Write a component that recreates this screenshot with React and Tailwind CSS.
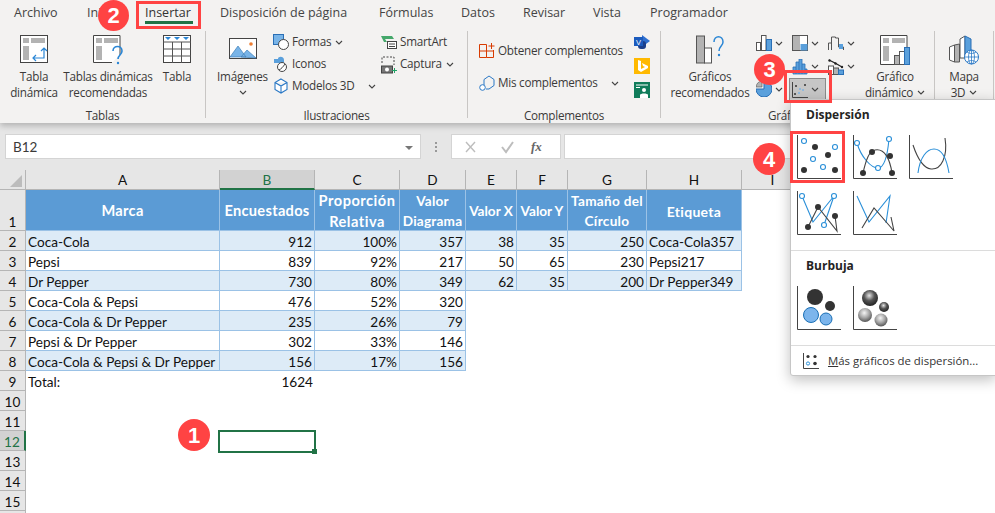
import React from "react";

const columns = ["A", "B", "C", "D", "E", "F", "G", "H", "I", "J"];

const rows = [
  { n: 2, band: true, cells: ["Coca-Cola", "912", "100%", "357", "38", "35", "250", "Coca-Cola357"] },
  { n: 3, cells: ["Pepsi", "839", "92%", "217", "50", "65", "230", "Pepsi217"] },
  { n: 4, band: true, cells: ["Dr Pepper", "730", "80%", "349", "62", "35", "200", "Dr Pepper349"] },
  { n: 5, cells: ["Coca-Cola & Pepsi", "476", "52%", "320"] },
  { n: 6, band: true, cells: ["Coca-Cola & Dr Pepper", "235", "26%", "79"] },
  { n: 7, cells: ["Pepsi & Dr Pepper", "302", "33%", "146"] },
  { n: 8, band: true, cells: ["Coca-Cola & Pepsi & Dr Pepper", "156", "17%", "156"] },
];

const headers = [
  { lines: ["Marca"], cls: "text-[14.6px] tracking-[0.3px]" },
  { lines: ["Encuestados"], cls: "text-[14.6px] tracking-[0.3px]" },
  { lines: ["Proporción", "Relativa"], cls: "text-[14.6px] tracking-[0.5px]" },
  { lines: ["Valor", "Diagrama"], cls: "tracking-[0.2px]" },
  { lines: ["Valor X"], cls: "" },
  { lines: ["Valor Y"], cls: "" },
  { lines: ["Tamaño del", "Círculo"], cls: "tracking-[0.3px]" },
  { lines: ["Etiqueta"], cls: "text-[14px] tracking-[0.3px]" },
];

function Chevron({ className = "" }) {
  return (
    <svg width="8" height="5" viewBox="0 0 8 5" className={className}>
      <path d="M1 1l3 3 3-3" fill="none" stroke="#444" strokeWidth="1.1" />
    </svg>
  );
}

function Sep() {
  return <div className="mt-[3px] h-[87px] w-px shrink-0 bg-[#c8c6c4]" />;
}

function Group({ width, label, labelClass = "", children }) {
  return (
    <div className={`flex h-[95px] shrink-0 flex-col ${width}`}>
      <div className="flex h-[79px] items-start">{children}</div>
      <div className={`h-4 text-center leading-4 ${labelClass}`}>{label}</div>
    </div>
  );
}

function BigButton({ width, icon, lines, chevronLine, ml = "" }) {
  return (
    <div className={`flex shrink-0 flex-col items-center text-center ${width} ${ml}`}>
      <div className="flex h-[40px] items-start pt-[7px]">{icon}</div>
      {lines.map((l, i) => (
        <div key={i} className="flex h-4 items-center gap-1 whitespace-nowrap leading-4">
          {l}
          {chevronLine === i && <Chevron />}
        </div>
      ))}
    </div>
  );
}

function SmallRow({ icon, label, chevron }) {
  return (
    <div className="flex h-[22px] items-center gap-[3px] whitespace-nowrap">
      <div className="h-4 w-4 shrink-0">{icon}</div>
      <span>{label}</span>
      {chevron}
    </div>
  );
}

/* ribbon icons */
const PivotIcon = () => (
  <svg width="28" height="28" viewBox="0 0 28 28">
    <rect x="0.5" y="0.5" width="27" height="27" fill="#fff" stroke="#444" />
    <rect x="3" y="3" width="6" height="5" fill="#b3b3b3" />
    <rect x="11" y="3" width="14" height="5" fill="#b3b3b3" />
    <rect x="3" y="11" width="6" height="14" fill="#b3b3b3" />
    <path d="M13 23h11v-10M21 16l3-3 3 3M16 20l-3 3 3 3" fill="none" stroke="#2a86d5" strokeWidth="1.2" />
  </svg>
);

const RecommendedPivotIcon = () => (
  <svg width="30" height="30" viewBox="0 0 30 30">
    <path d="M27 20V.5H.5v27H19" fill="#fff" stroke="#444" />
    <rect x="3" y="3" width="6" height="5" fill="#b3b3b3" />
    <rect x="11" y="3" width="14" height="5" fill="#b3b3b3" />
    <rect x="3" y="11" width="6" height="14" fill="#b3b3b3" />
    <path d="M20 16c0-6 9-6 9 0 0 4-4 4-4 8" fill="none" stroke="#2a86d5" strokeWidth="1.6" />
    <circle cx="25" cy="28" r="1.2" fill="#2a86d5" />
  </svg>
);

const TableIcon = () => (
  <svg width="28" height="28" viewBox="0 0 28 28">
    <rect x="0.5" y="0.5" width="27" height="27" fill="#fff" stroke="#444" />
    <path d="M0 7h28M0 14h28M0 21h28M9.5 7v21M18.5 7v21" stroke="#555" />
    <path d="M2 2h6l-3 3zM11 2h6l-3 3zM20 2h6l-3 3z" fill="#2a86d5" />
  </svg>
);

const PictureIcon = () => (
  <svg width="28" height="21" viewBox="0 0 28 21" className="mt-[3px]">
    <rect x="0.5" y="0.5" width="27" height="20" fill="#fff" stroke="#444" />
    <path d="M1 19l8-11 8 11zM12 19l6-7 9 8v0z" fill="#78b4e8" stroke="#3f7fb8" strokeWidth="0.7" />
    <circle cx="22" cy="6" r="1.8" fill="#ed7d31" />
  </svg>
);

const ShapesIcon = () => (
  <svg width="16" height="16" viewBox="0 0 16 16">
    <rect x="0.5" y="0.5" width="10" height="10" fill="#78b4e8" stroke="#2a6fb5" />
    <circle cx="10.5" cy="10.5" r="5" fill="#fff" stroke="#444" />
  </svg>
);

const IconsIcon = () => (
  <svg width="16" height="16" viewBox="0 0 16 16">
    <path d="M1 3h4c0-3 6-3 6 1v3H1z" fill="#5aa0dc" />
    <circle cx="9" cy="11" r="4.5" fill="#fff" stroke="#444" />
    <path d="M6 14c2-1 4-3 6-6" stroke="#444" fill="none" />
  </svg>
);

const ModelsIcon = () => (
  <svg width="16" height="16" viewBox="0 0 16 16">
    <path d="M8 1l6 3.5v7L8 15l-6-3.5v-7zM2 4.5L8 8l6-3.5M8 8v7" fill="#fff" stroke="#2a78c5" strokeWidth="1.1" />
  </svg>
);

const SmartArtIcon = () => (
  <svg width="16" height="16" viewBox="0 0 16 16">
    <path d="M0 2h11l2 3H4l2 3H3z" fill="#45a86b" />
    <rect x="6.5" y="7.5" width="9" height="7" fill="#fff" stroke="#444" />
    <path d="M8 10h6M8 12.5h6" stroke="#444" />
  </svg>
);

const CaptureIcon = () => (
  <svg width="16" height="18" viewBox="0 0 16 18">
    <path d="M1 7V1h12v8" fill="none" stroke="#444" strokeDasharray="2 1.5" />
    <rect x="0.5" y="10" width="11" height="7" fill="#777" stroke="#444" />
    <circle cx="6" cy="13.5" r="2" fill="#fff" />
    <path d="M13.5 12v5M11 14.5h5" stroke="#21a366" />
  </svg>
);

const GetAddinsIcon = () => (
  <svg width="16" height="16" viewBox="0 0 16 16">
    <path d="M.5 1.5h7v13h-7zM.5 8h14v6.5h-7M14.5 8V7" fill="none" stroke="#d83b01" />
    <path d="M12.5 0v6M9.5 3h6" stroke="#d83b01" />
  </svg>
);

const MyAddinsIcon = () => (
  <svg width="16" height="16" viewBox="0 0 16 16">
    <path d="M5 10V4.5L10 1l5 3.5v6L10 14H7" fill="none" stroke="#2a78c5" />
    <circle cx="3.5" cy="12.5" r="2.8" fill="#fff" stroke="#2a78c5" />
  </svg>
);

const VisioIcon = () => (
  <svg width="16" height="16" viewBox="0 0 16 16">
    <path d="M8 1l8 6-8 6z" fill="#2f6fcf" />
    <rect x="4" y="7" width="8" height="8" rx="3" fill="#1b3f8b" />
    <rect x="0" y="3" width="9" height="9" fill="#1b5bbd" />
    <text x="4.5" y="10.5" fontSize="7.5" fill="#fff" textAnchor="middle" fontFamily="Liberation Sans, sans-serif">V</text>
  </svg>
);

const BingIcon = () => (
  <svg width="16" height="16" viewBox="0 0 16 16">
    <rect width="16" height="16" fill="#ffb900" />
    <path d="M4 2l3 1v8l4-2-2-1-1-3 6 3v2l-7 4-3-2z" fill="#fff" />
  </svg>
);

const PeopleIcon = () => (
  <svg width="16" height="16" viewBox="0 0 16 16">
    <rect width="16" height="16" fill="#107c5a" />
    <path d="M2 3h12M2 5.5h4" stroke="#fff" />
    <circle cx="10" cy="8" r="2" fill="#fff" />
    <path d="M6 16v-3c0-2 8-2 8 0v3z" fill="#fff" />
  </svg>
);

const RecommendedChartIcon = () => (
  <svg width="28" height="29" viewBox="0 0 28 29">
    <rect x="0.5" y="1" width="8" height="27" fill="#b3b3b3" stroke="#555" />
    <rect x="8.5" y="13" width="7" height="15" fill="#fff" stroke="#555" />
    <path d="M18 7c0-7 9-7 9 0 0 4-4 4-4 9" fill="none" stroke="#2a86d5" strokeWidth="1.5" />
    <circle cx="23" cy="20" r="1.2" fill="#2a86d5" />
  </svg>
);

const ColumnsIcon = () => (
  <svg width="16" height="16" viewBox="0 0 16 16">
    <rect x="0.5" y="7.5" width="4" height="8" fill="#fff" stroke="#555" />
    <rect x="5.5" y="0.5" width="4.5" height="15" fill="#fff" stroke="#555" />
    <rect x="10.5" y="4.5" width="5" height="11" fill="#5aa0dc" stroke="#2a6fb5" />
  </svg>
);

const HierarchyIcon = () => (
  <svg width="16" height="16" viewBox="0 0 16 16">
    <rect x="0.5" y="0.5" width="15" height="15" fill="#fff" stroke="#555" />
    <rect x="1" y="1" width="7" height="14" fill="#b3b3b3" />
    <rect x="8.5" y="9" width="7" height="6.5" fill="#5aa0dc" />
  </svg>
);

const WaterfallIcon = () => (
  <svg width="16" height="16" viewBox="0 0 16 16">
    <path d="M.5 15V8h3V2h4v1h3v9h5v3" fill="none" stroke="#555" />
    <rect x="11" y="9" width="4" height="5" fill="#5aa0dc" />
    <path d="M3.5 8v7" stroke="#555" />
  </svg>
);

const HistogramIcon = () => (
  <svg width="16" height="16" viewBox="0 0 16 16">
    <path d="M1 15V8h3V3h3V0h3v5h3v5h2v5z" fill="#5aa0dc" stroke="#2a6fb5" strokeWidth="0.8" />
    <path d="M4 8v7M7 3v12M10 5v10M13 10v5" stroke="#2a6fb5" strokeWidth="0.8" />
  </svg>
);

const ComboIcon = () => (
  <svg width="16" height="16" viewBox="0 0 16 16">
    <rect x="0.5" y="7" width="5" height="8.5" fill="#fff" stroke="#555" />
    <rect x="5.5" y="9" width="5" height="6.5" fill="#b3b3b3" stroke="#555" />
    <rect x="10.5" y="11" width="5" height="4.5" fill="#5aa0dc" stroke="#2a6fb5" />
    <path d="M1 1l6 3 7 4" stroke="#222" strokeWidth="1.2" />
    <circle cx="1.5" cy="1.5" r="1.2" fill="#222" />
    <circle cx="7.5" cy="4.5" r="1.2" fill="#222" />
    <circle cx="14" cy="8" r="1.2" fill="#222" />
  </svg>
);

const PieIcon = () => (
  <svg width="16" height="16" viewBox="0 0 16 16">
    <path d="M8 0a8 8 0 1 1-8 8h8z" fill="#5aa0dc" stroke="#2a6fb5" />
    <path d="M0 6a7 7 0 0 1 6-6v6z" fill="#b3b3b3" stroke="#555" strokeWidth="0.6" />
  </svg>
);

const SmallScatterIcon = () => (
  <svg width="16" height="16" viewBox="0 0 16 16">
    <path d="M.5 0v15.5H16" fill="none" stroke="#444" />
    <circle cx="4" cy="4" r="1" fill="#333" />
    <circle cx="13" cy="3" r="1" fill="#333" />
    <circle cx="3" cy="12" r="1" fill="#333" />
    <circle cx="8" cy="7" r="1" fill="#7fb4e3" />
    <circle cx="11" cy="8" r="1" fill="#7fb4e3" />
    <circle cx="7" cy="11" r="1" fill="#7fb4e3" />
  </svg>
);

const PivotChartIcon = () => (
  <svg width="30" height="30" viewBox="0 0 30 30">
    <path d="M27 12V.5H.5v29H14" fill="#fff" stroke="#444" />
    <rect x="3" y="3" width="6" height="5" fill="#b3b3b3" />
    <rect x="12" y="3" width="13" height="5" fill="#b3b3b3" />
    <rect x="3" y="11" width="6" height="15" fill="#b3b3b3" />
    <rect x="14.5" y="20.5" width="5" height="9" fill="#b3b3b3" stroke="#555" />
    <rect x="19.5" y="16.5" width="5" height="13" fill="#fff" stroke="#555" />
    <rect x="24.5" y="12.5" width="5" height="17" fill="#5aa0dc" stroke="#2a6fb5" />
  </svg>
);

const MapIcon = () => (
  <svg width="30" height="30" viewBox="0 0 30 30">
    <path d="M.5 12l5-2v17l-5-2z" fill="#fff" stroke="#555" />
    <path d="M5.5 10l5-1v18h-5z" fill="#b3b3b3" stroke="#555" />
    <path d="M11 4l5-3v22h-5z" fill="#fff" stroke="#555" />
    <path d="M16 1l6 3v12l-6 4z" fill="#5aa0dc" stroke="#2a6fb5" />
    <circle cx="22.5" cy="22" r="7" fill="#fff" stroke="#2a78c5" />
    <path d="M15.5 22h14M22.5 15v14M18 17c3 2 6 2 9 0M18 27c3-2 6-2 9 0" fill="none" stroke="#2a78c5" strokeWidth="0.8" />
    <ellipse cx="22.5" cy="22" rx="3" ry="7" fill="none" stroke="#2a78c5" strokeWidth="0.8" />
  </svg>
);

/* gallery thumbnails */
function Thumb({ children }) {
  return (
    <svg width="44" height="44" viewBox="0 0 44 44">
      <path d="M.5 0v43.5H44" fill="none" stroke="#444" />
      {children}
    </svg>
  );
}

const Hollow = ({ x, y }) => <circle cx={x} cy={y} r="2.5" fill="#fff" stroke="#2a8fd8" strokeWidth="1.1" />;
const Solid = ({ x, y }) => <circle cx={x} cy={y} r="3" fill="#333" />;

function BadgeNum({ n, className }) {
  return (
    <div className={`absolute z-20 flex items-center justify-center rounded-full bg-[#ff4343] font-['Liberation_Sans',sans-serif] text-[22px] font-bold text-white ${className}`}>
      {n}
    </div>
  );
}

function Cell({ children, right, band, table }) {
  return (
    <div
      className={`flex items-center overflow-visible whitespace-nowrap pt-[4px] pr-[2px] pl-[2px] ${right ? "justify-end" : ""} ${band ? "bg-[#ddebf7]" : ""} ${table ? "border-r border-b border-[#9bc2e6]" : ""}`}
    >
      {children}
    </div>
  );
}

function RowHead({ n, active }) {
  return (
    <div
      className={`flex items-center justify-center border-b border-[#b5b5b5] pt-[4px] ${active ? "border-r-2 border-r-[#217346] bg-[#d2d2d2] text-[#217346]" : "border-r border-r-[#b5b5b5] bg-[#e6e6e6]"}`}
    >
      {n}
    </div>
  );
}

export default function App() {
  const gridCols = "grid-cols-[26px_194px_95px_85px_66px_51px_51px_79px_95px_62px_1fr]";

  return (
    <div className="relative h-[513px] w-[995px] overflow-hidden bg-white font-['Open_Sans',sans-serif] text-[11.7px] text-[#3b3a39]">
      {/* Tabs */}
      <div className="relative z-10 bg-[#f3f2f1] shadow-[0_3px_6px_rgba(0,0,0,0.22)]">
        <div className="flex h-[28px] items-center pb-[1px] pl-[14px] text-[12.5px] text-[#444]">
          <div className="w-[73px]">Archivo</div>
          <div className="w-[58px]">Inicio</div>
          <div className="relative w-[75px] font-medium text-[#333]">
            Insertar
            <div className="absolute top-[17px] left-0 h-[3px] w-[48px] bg-[#217346]" />
          </div>
          <div className="w-[159px]">Disposición de página</div>
          <div className="w-[82px]">Fórmulas</div>
          <div className="w-[62px]">Datos</div>
          <div className="w-[70px]">Revisar</div>
          <div className="w-[57px]">Vista</div>
          <div>Programador</div>
        </div>

        {/* Ribbon */}
        <div className="flex h-[95px] tracking-[-0.25px]">
          <Group width="w-[205px]" label="Tablas">
            <BigButton width="w-[56px]" ml="ml-[6px]" icon={<PivotIcon />} lines={["Tabla", "dinámica"]} />
            <BigButton width="w-[92px]" icon={<RecommendedPivotIcon />} lines={["Tablas dinámicas", "recomendadas"]} />
            <BigButton width="w-[46px]" icon={<TableIcon />} lines={["Tabla"]} />
          </Group>
          <Sep />

          <Group width="w-[261px]" label="Ilustraciones">
            <div className="ml-[6px] flex w-[61px] shrink-0 flex-col items-center text-center">
              <div className="flex h-[40px] items-start pt-[7px]"><PictureIcon /></div>
              <div className="h-4 leading-4">Imágenes</div>
              <div className="flex h-4 items-center"><Chevron /></div>
            </div>
            <div className="flex w-[108px] shrink-0 flex-col pt-[3px]">
              <SmallRow icon={<ShapesIcon />} label="Formas" chevron={<Chevron className="ml-[1px]" />} />
              <SmallRow icon={<IconsIcon />} label="Iconos" />
              <SmallRow icon={<ModelsIcon />} label="Modelos 3D" chevron={<Chevron className="ml-[10px]" />} />
            </div>
            <div className="flex shrink-0 flex-col pt-[3px]">
              <SmallRow icon={<SmartArtIcon />} label="SmartArt" />
              <SmallRow icon={<CaptureIcon />} label="Captura" chevron={<Chevron className="ml-[1px]" />} />
            </div>
          </Group>
          <Sep />

          <Group width="w-[192px]" label="Complementos">
            <div className="ml-[11px] flex w-[155px] shrink-0 flex-col gap-[10px] pt-[12px]">
              <SmallRow icon={<GetAddinsIcon />} label="Obtener complementos" />
              <SmallRow icon={<MyAddinsIcon />} label="Mis complementos" chevron={<Chevron className="ml-[10px]" />} />
            </div>
            <div className="flex shrink-0 flex-col gap-2 pt-[6px]">
              <VisioIcon />
              <BingIcon />
              <PeopleIcon />
            </div>
          </Group>
          <Sep />

          <Group width="w-[273px]" label="Gráficos" labelClass="pr-[16px]">
            <BigButton width="w-[92px]" ml="ml-[3px]" icon={<RecommendedChartIcon />} lines={["Gráficos", "recomendados"]} />
            <div className="grid shrink-0 grid-cols-[36px_36px_28px] grid-rows-[24px_23px_22px] pt-[3px]">
              <div className="flex items-center gap-[3px]"><ColumnsIcon /><Chevron /></div>
              <div className="flex items-center gap-[3px]"><HierarchyIcon /><Chevron /></div>
              <div className="flex items-center gap-[3px]"><WaterfallIcon /><Chevron /></div>
              <div />
              <div className="flex items-center gap-[3px]"><HistogramIcon /><Chevron /></div>
              <div className="flex items-center gap-[3px]"><ComboIcon /><Chevron /></div>
              <div className="flex items-center gap-[3px]"><PieIcon /><Chevron /></div>
              <div className="-ml-[3px] flex h-[23px] w-[37px] items-center gap-[3px] border border-[#8a8a8a] bg-[#c6c6c6] pl-[2px]">
                <SmallScatterIcon />
                <Chevron />
              </div>
              <div />
            </div>
            <BigButton width="w-[78px]" icon={<PivotChartIcon />} lines={["Gráfico", "dinámico"]} chevronLine={1} />
          </Group>
          <Sep />

          <Group width="w-[58px]" label="">
            <BigButton width="w-[58px]" icon={<MapIcon />} lines={["Mapa", "3D"]} chevronLine={1} />
          </Group>
          <Sep />
        </div>
      </div>

      {/* Formula bar */}
      <div className="flex h-[47px] items-start bg-[#e6e6e6] pt-[11px] text-[13px]">
        <div className="ml-[5px] flex h-[25px] w-[416px] items-center justify-between border border-[#d4d4d4] bg-white pt-[2px] pr-[7px] pl-[7px] font-[Lato,sans-serif] text-[13.5px]">
          B12
          <div className="h-0 w-0 border-x-[4px] border-t-[4px] border-x-transparent border-t-[#777]" />
        </div>
        <div className="flex h-[25px] w-[30px] flex-col items-center justify-center gap-[2px]">
          <div className="h-[2px] w-[2px] bg-[#999]" />
          <div className="h-[2px] w-[2px] bg-[#999]" />
          <div className="h-[2px] w-[2px] bg-[#999]" />
        </div>
        <div className="flex h-[25px] w-[110px] items-center border border-[#d4d4d4] bg-white">
          <svg width="36" height="14" viewBox="0 0 36 14" className="ml-[1px]">
            <path d="M13 2l9 10M22 2l-9 10" stroke="#bdbdbd" strokeWidth="1.4" />
          </svg>
          <svg width="36" height="14" viewBox="0 0 36 14">
            <path d="M13 7l4 5 7-10" fill="none" stroke="#bdbdbd" strokeWidth="2" />
          </svg>
          <span className="ml-[6px] font-['Liberation_Serif',serif] text-[13px] font-bold italic text-[#666]">fx</span>
        </div>
        <div className="ml-[3px] h-[25px] flex-1 border border-[#d4d4d4] bg-white" />
      </div>

      {/* Sheet */}
      <div className={`grid ${gridCols} grid-rows-[20px_41px_repeat(15,20px)] font-[Lato,sans-serif] text-[13.6px] leading-none text-[#111]`}>
        {/* column headers */}
        <div className="relative border-r border-b border-[#b5b5b5] bg-[#e6e6e6]">
          <div className="absolute right-[3px] bottom-[2px] h-0 w-0 border-b-[12px] border-l-[12px] border-b-[#bcbcbc] border-l-transparent" />
        </div>
        {columns.map((c) => (
          <div
            key={c}
            className={`flex items-center justify-center border-r border-[#b5b5b5] pt-[3px] ${c === "B" ? "border-b-2 border-b-[#217346] bg-[#d2d2d2] text-[#217346]" : "border-b bg-[#e6e6e6]"}`}
          >
            {c}
          </div>
        ))}

        {/* header row */}
        <div className="flex items-end justify-center border-r border-b border-[#b5b5b5] bg-[#e6e6e6]">1</div>
        {headers.map((h, i) => (
          <div
            key={i}
            className={`flex flex-col items-center justify-center gap-[6px] border-r border-b border-[#9bc2e6] bg-[#5b9bd5] pt-[3px] font-bold whitespace-nowrap text-white ${h.cls}`}
          >
            {h.lines.map((l) => (
              <span key={l}>{l}</span>
            ))}
          </div>
        ))}
        <div className="col-span-2" />

        {/* table rows */}
        {rows.map((r) => (
          <React.Fragment key={r.n}>
            <RowHead n={r.n} />
            {Array.from({ length: 8 }).map((_, i) => {
              const v = r.cells[i];
              if (v === undefined) return <div key={i} />;
              return (
                <Cell key={i} right={i > 0 && i < 7} band={r.band} table>
                  {v}
                </Cell>
              );
            })}
            <div className="col-span-2" />
          </React.Fragment>
        ))}

        {/* rest of the sheet */}
        <RowHead n={9} />
        <Cell>Total:</Cell>
        <Cell right>1624</Cell>
        <div className="col-span-8" />
        {[10, 11, 12, 13, 14, 15, ""].map((n) => (
          <React.Fragment key={n}>
            <RowHead n={n} active={n === 12} />
            <div className="col-span-10" />
          </React.Fragment>
        ))}
      </div>

      {/* selected cell */}
      <div className="absolute top-[430px] left-[218px] h-[23px] w-[98px] border-2 border-[#217346]">
        <div className="absolute -right-[3px] -bottom-[3px] h-[5px] w-[5px] bg-[#217346]" />
      </div>

      {/* Chart dropdown */}
      <div className="absolute top-[99px] left-[790px] z-10 h-[277px] w-[206px] rounded-bl-[3px] border border-[#c6c6c6] bg-white text-[#333] shadow-[0_4px_14px_rgba(0,0,0,0.25)]">
        <div className="ml-[15px] mt-[7px] h-4 text-[12px] leading-4 font-bold text-[#252423]">Dispersión</div>
        <div className="mt-[12px] ml-[6px] grid w-max grid-cols-[44px_44px_44px] gap-3">
          <Thumb>
            <Hollow x={7} y={6} /><Hollow x={38} y={12} /><Hollow x={16} y={24} /><Hollow x={26} y={32} />
            <Solid x={18} y={12} /><Solid x={31} y={20} /><Solid x={7} y={35} /><Solid x={38} y={35} />
          </Thumb>
          <Thumb>
            <path d="M4 8C8 22 18 33 25 33 33 33 35 15 36 4" fill="none" stroke="#2a8fd8" strokeWidth="1.1" />
            <path d="M10 38C13 25 16 16 22 15 32 13 37 25 39 38" fill="none" stroke="#444" strokeWidth="1.1" />
            <Hollow x={4} y={8} /><Hollow x={36} y={4} /><Hollow x={25} y={33} />
            <Solid x={19} y={17} /><Solid x={37} y={21} /><Solid x={10} y={38} /><Solid x={39} y={38} />
          </Thumb>
          <Thumb>
            <path d="M4 10C8 22 14 33 22 34 32 35 39 22 36 3" fill="none" stroke="#444" strokeWidth="1.1" />
            <path d="M9 38C11 22 18 14 25 14 34 14 38 26 40 38" fill="none" stroke="#2a8fd8" strokeWidth="1.1" />
          </Thumb>
          <Thumb>
            <path d="M5 5L16 31 37 5 27 34" fill="none" stroke="#2a8fd8" strokeWidth="1.1" />
            <path d="M11 36L21 16 40 40 38 25" fill="none" stroke="#444" strokeWidth="1.1" />
            <Hollow x={5} y={5} /><Hollow x={37} y={5} /><Hollow x={27} y={34} />
            <Solid x={11} y={36} /><Solid x={21} y={16} /><Solid x={38} y={25} />
          </Thumb>
          <Thumb>
            <path d="M4 5L16 31 37 5 33 32" fill="none" stroke="#2a8fd8" strokeWidth="1.1" />
            <path d="M9 37L21 17 41 40 38 26" fill="none" stroke="#444" strokeWidth="1.1" />
          </Thumb>
        </div>
        <div className="mt-[15px] h-px bg-[#dcdcdc]" />
        <div className="ml-[15px] mt-[7px] h-4 text-[12px] leading-4 font-bold text-[#252423]">Burbuja</div>
        <div className="mt-[12px] ml-[6px] flex gap-3">
          <Thumb>
            <circle cx="18" cy="11" r="8" fill="#333" />
            <circle cx="33" cy="20" r="5" fill="#333" />
            <circle cx="14" cy="29" r="7.5" fill="#7cb5ec" stroke="#1a6fb5" />
            <circle cx="29" cy="33" r="6" fill="#7cb5ec" stroke="#1a6fb5" />
          </Thumb>
          <Thumb>
            <defs>
              <radialGradient id="ball" cx="45%" cy="35%" r="65%">
                <stop offset="0%" stopColor="#f5f5f5" />
                <stop offset="55%" stopColor="#a5a5a5" />
                <stop offset="100%" stopColor="#555" />
              </radialGradient>
              <radialGradient id="ballDark" cx="45%" cy="35%" r="65%">
                <stop offset="0%" stopColor="#e5e5e5" />
                <stop offset="50%" stopColor="#555" />
                <stop offset="100%" stopColor="#222" />
              </radialGradient>
            </defs>
            <circle cx="17" cy="12" r="8" fill="url(#ballDark)" />
            <circle cx="31" cy="21" r="5" fill="url(#ballDark)" />
            <circle cx="12" cy="29" r="7" fill="url(#ball)" />
            <circle cx="28" cy="34" r="6.5" fill="url(#ball)" />
          </Thumb>
        </div>
        <div className="mt-[15px] h-px bg-[#dcdcdc]" />
        <div className="mt-[6px] ml-[12px] flex h-[18px] items-center gap-[9px] text-[11.4px] whitespace-nowrap">
          <svg width="16" height="16" viewBox="0 0 16 16">
            <path d="M.5 0v15.5H16" fill="none" stroke="#444" />
            <circle cx="5" cy="3.5" r="1.6" fill="#333" />
            <circle cx="12" cy="3.5" r="1.6" fill="#333" />
            <circle cx="5" cy="10.5" r="1.6" fill="#fff" stroke="#2a8fd8" />
            <circle cx="12" cy="10.5" r="1.8" fill="#333" />
          </svg>
          <span>
            <u>M</u>ás gráficos de dispersión...
          </span>
        </div>
      </div>

      {/* Callouts */}
      <div className="absolute top-[1px] left-[136px] z-20 h-[28px] w-[65px] border-[3px] border-[#ff4343]" />
      <div className="absolute top-[70px] left-[784px] z-20 h-[33px] w-[48px] border-[3px] border-[#ff4343]" />
      <div className="absolute top-[131px] left-[790px] z-20 h-[52px] w-[55px] border-[3px] border-[#ff4343]" />
      <BadgeNum n="2" className="top-0 left-[98px] h-[31px] w-[31px]" />
      <BadgeNum n="3" className="top-[54px] left-[754px] h-[31px] w-[31px]" />
      <BadgeNum n="4" className="top-[143px] left-[753px] h-[32px] w-[32px]" />
      <BadgeNum n="1" className="top-[419px] left-[178px] h-[32px] w-[32px]" />
    </div>
  );
}
